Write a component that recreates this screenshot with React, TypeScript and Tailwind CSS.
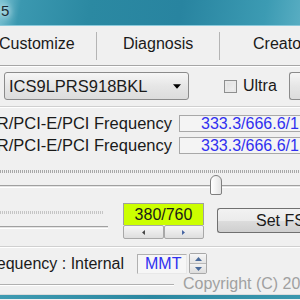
const Tri = ({ dir, className = "" }: { dir: "up" | "down" | "left" | "right"; className?: string }) => {
  const pts = {
    up: "0,4 3.5,0 7,4",
    down: "0,0 7,0 3.5,4",
    left: "4,0 4,7 0,3.5",
    right: "0,0 0,7 4,3.5",
  }[dir];
  const vb = dir === "up" || dir === "down" ? "0 0 7 4" : "0 0 4 7";
  return (
    <svg viewBox={vb} className={className}>
      <polygon points={pts} fill="currentColor" />
    </svg>
  );
};

const Ticks = ({ className }: { className: string }) => (
  <div
    className={`h-[3px] bg-[repeating-linear-gradient(90deg,#a8a8a8_0_1px,transparent_1px_2px)] ${className}`}
  />
);

const Track = ({ className }: { className: string }) => (
  <div className={`h-[3px] border-t border-[#a0a0a0] bg-[#e4e4e4] border-b border-b-white ${className}`} />
);

const FreqRow = ({ label }: { label: string }) => (
  <div className="flex items-center h-[17px]">
    <div className="w-[175px] shrink-0 flex justify-end overflow-hidden whitespace-nowrap pr-[3px] text-[16.5px]">
      <span>{label}</span>
    </div>
    <div className="ml-[4px] flex-1 min-w-0 h-[17px] border border-[#a8a8a8] border-r-0 bg-[#f4f4f4] pl-[21px] leading-[15px] text-[#3030f0] whitespace-nowrap overflow-hidden">
      333.3/666.6/1
    </div>
  </div>
);

export default function App() {
  return (
    <div className="w-[300px] h-[300px] overflow-hidden bg-[#f0f0f0] text-[16px] text-[#1a1a1a] font-['Liberation_Sans',Arial,sans-serif]">
      {/* title bar */}
      <div className="h-[26px] border-b border-[#8ccadb] bg-[linear-gradient(100deg,#7cc3d3_0%,#3b98b0_7%,#2b89a2_30%,#2884a0_60%,#3c9bb3_88%,#58adc2_100%)] flex items-start pt-[2px]">
        <span className="pl-[1px] text-[15px] leading-[18px] text-[#1c2c33] [text-shadow:0_0_6px_#ffffff,0_0_10px_#dff4f8]">
          5
        </span>
      </div>

      {/* tabs */}
      <div className="h-[40px] border-b border-[#a6a6a6] flex items-center shadow-[0_1px_0_#ffffff]">
        <div className="w-[97px] shrink-0 pb-[3px] -ml-[1px]">Customize</div>
        <div className="w-px shrink-0 h-[28px] bg-[#b4b4b4]" />
        <div className="w-[122px] shrink-0 pl-[26px] pb-[3px]">Diagnosis</div>
        <div className="w-px shrink-0 h-[28px] bg-[#b4b4b4]" />
        <div className="pl-[33px] pb-[3px] whitespace-nowrap">Creator</div>
      </div>

      {/* chip row */}
      <div className="flex items-center pt-[6px] h-[34px]">
        <div className="ml-[4px] shrink-0 w-[185px] h-[28px] rounded-[3px] border border-[#8b8b8b] bg-[linear-gradient(#f6f6f6,#e6e6e6_50%,#dcdcdc)] flex items-center pl-[4px]">
          <span className="flex-1 text-[16.5px]">ICS9LPRS918BKL</span>
          <Tri dir="down" className="w-[8px] h-[5px] mr-[7px] text-black" />
        </div>
        <div className="ml-[35px] shrink-0 w-[13px] h-[13px] border border-[#8e8f8f] bg-[linear-gradient(135deg,#dcdcdc,#f4f4f4)] shadow-[inset_0_0_0_2px_#e8e8e8]" />
        <span className="ml-[6px]">Ultra</span>
        <div className="ml-[12px] flex-1 h-[28px] rounded-l-[3px] border border-r-0 border-[#8b8b8b] bg-[linear-gradient(#f6f6f6,#e6e6e6_50%,#dcdcdc)]" />
      </div>

      <div className="mt-[6px] h-px bg-[#d0d0d0] shadow-[0_1px_0_#ffffff]" />

      <div className="mt-[8px] flex flex-col gap-[5px]">
        <FreqRow label="DDR/PCI-E/PCI Frequency" />
        <FreqRow label="DDR/PCI-E/PCI Frequency" />
      </div>

      {/* main slider */}
      <div className="relative mt-[16px] h-[27px]">
        <Ticks className="w-full" />
        <Track className="w-full mt-[12px]" />
        <div className="absolute left-[210px] top-[5px] w-[12px] h-[20px] rounded-t-[6px] rounded-b-[2px] border border-[#7f7f7f] bg-[linear-gradient(90deg,#ffffff,#e4e4e4)]" />
      </div>

      {/* fsb row */}
      <div className="flex mt-[6px] h-[36px]">
        <div className="w-[110px] shrink-0 pt-[8px]">
          <Ticks className="w-[103px] opacity-60" />
          <Track className="w-[108px] mt-[12px]" />
        </div>
        <div className="ml-[13px] shrink-0 w-[81px] flex flex-col">
          <div className="h-[22px] bg-[#ccff00] border border-[#a0a0a0] border-b-0 text-center leading-[22px]">
            380/760
          </div>
          <div className="flex h-[14px]">
            <div className="flex-1 border border-[#a8a8a8] rounded-[2px] bg-[linear-gradient(#f6f6f6,#dedede)] flex items-center justify-center">
              <Tri dir="left" className="w-[3px] h-[5px] text-[#404040]" />
            </div>
            <div className="flex-1 border border-[#a8a8a8] rounded-[2px] bg-[linear-gradient(#f6f6f6,#dedede)] flex items-center justify-center">
              <Tri dir="right" className="w-[3px] h-[5px] text-[#4060a0]" />
            </div>
          </div>
        </div>
        <div className="ml-[13px] mt-[5px] flex-1 min-w-0 overflow-hidden h-[25px] rounded-l-[3px] border border-r-0 border-[#707070] bg-[linear-gradient(#f2f2f2,#ebebeb_50%,#dddddd_50%,#cfcfcf)] pl-[38px] leading-[23px] whitespace-nowrap">
          Set FS
        </div>
      </div>

      <div className="mt-[7px] h-px bg-[#d0d0d0] shadow-[0_1px_0_#ffffff]" />

      {/* source row */}
      <div className="flex items-center mt-[6px] h-[21px]">
        <div className="w-[128px] shrink-0 flex justify-end overflow-hidden whitespace-nowrap pr-[4px]">
          <span>Frequency : Internal</span>
        </div>
        <div className="ml-[9px] shrink-0 w-[50px] h-[20px] border border-[#b0b0b0] border-r-[#e8e8e8] border-b-[#e8e8e8] bg-[#f6f6f6] pl-[7px] leading-[18px] text-[#3030f0]">
          MMT
        </div>
        <div className="ml-[2px] shrink-0 w-[18px] h-[21px] flex flex-col border border-[#a8a8a8] rounded-[2px]">
          <div className="flex-1 flex items-center justify-center bg-[linear-gradient(#f6f6f6,#e4e4e4)] border-b border-[#b8b8b8]">
            <Tri dir="up" className="w-[7px] h-[4px] text-[#4a6a9a]" />
          </div>
          <div className="flex-1 flex items-center justify-center bg-[linear-gradient(#f2f2f2,#dcdcdc)]">
            <Tri dir="down" className="w-[7px] h-[4px] text-[#4a6a9a]" />
          </div>
        </div>
      </div>

      {/* footer */}
      <div className="flex items-center h-[20px]">
        <div className="w-[174px] shrink-0 h-px bg-[#b0b0b0] shadow-[0_1px_0_#ffffff]" />
        <span className="ml-[9px] text-[#a0a0a0] whitespace-nowrap">Copyright (C) 20</span>
      </div>
      <div className="h-px bg-[#dcdcdc]" />
      <div className="h-[4px] bg-[linear-gradient(90deg,#3f9bb2,#2b88a1,#3a97ae)]" />
    </div>
  );
}
